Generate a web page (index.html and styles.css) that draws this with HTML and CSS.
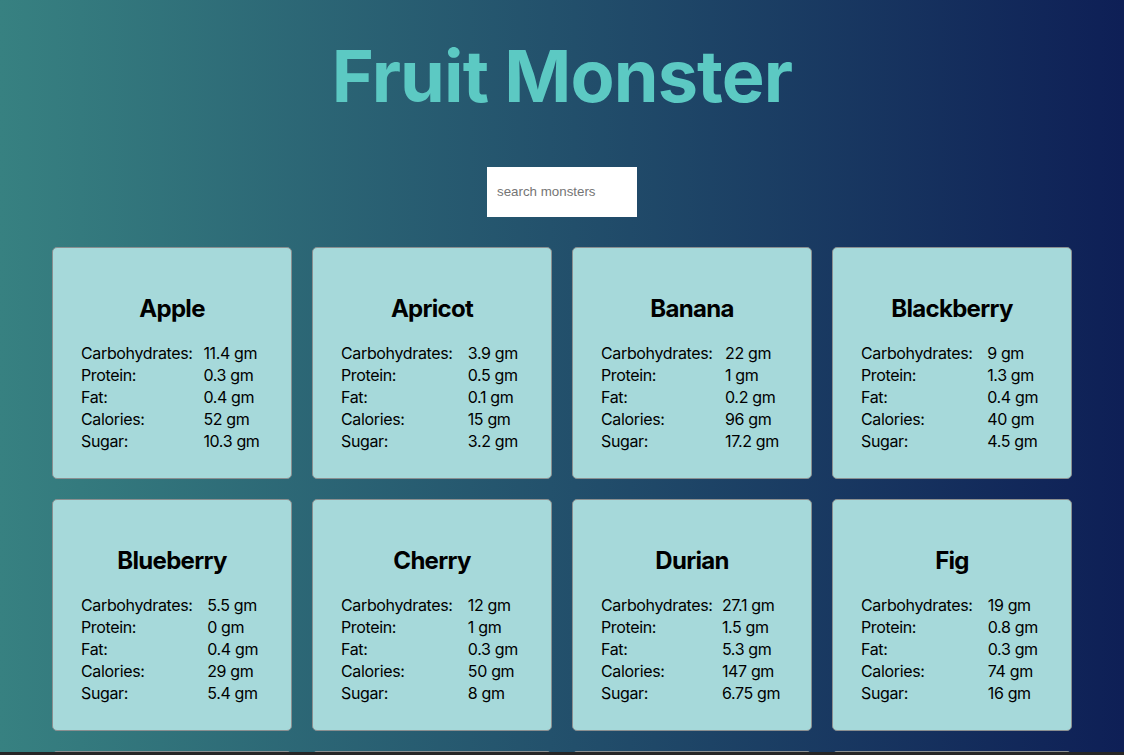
FILE: index.html
```html
<!doctype html>
<html lang="en">
  <head>
    <meta charset="UTF-8" />
    <meta name="viewport" content="width=device-width, initial-scale=1" />
    <title>Fruit Monster</title>
    <link rel="stylesheet" href="styles.css">
  </head>
  <body>
    <div class="app">
      <h1 class="app-title">Fruit Monster</h1>
      <input class="search" type="search" placeholder="search monsters" />

      <div class="card-list">
        <div class="card">
          <h2>Apple</h2>
          <table class="nutrition">
            <tr><td>Carbohydrates:</td><td>11.4 gm</td></tr>
            <tr><td>Protein:</td><td>0.3 gm</td></tr>
            <tr><td>Fat:</td><td>0.4 gm</td></tr>
            <tr><td>Calories:</td><td>52 gm</td></tr>
            <tr><td>Sugar:</td><td>10.3 gm</td></tr>
          </table>
        </div>
        <div class="card">
          <h2>Apricot</h2>
          <table class="nutrition">
            <tr><td>Carbohydrates:</td><td>3.9 gm</td></tr>
            <tr><td>Protein:</td><td>0.5 gm</td></tr>
            <tr><td>Fat:</td><td>0.1 gm</td></tr>
            <tr><td>Calories:</td><td>15 gm</td></tr>
            <tr><td>Sugar:</td><td>3.2 gm</td></tr>
          </table>
        </div>
        <div class="card">
          <h2>Banana</h2>
          <table class="nutrition">
            <tr><td>Carbohydrates:</td><td>22 gm</td></tr>
            <tr><td>Protein:</td><td>1 gm</td></tr>
            <tr><td>Fat:</td><td>0.2 gm</td></tr>
            <tr><td>Calories:</td><td>96 gm</td></tr>
            <tr><td>Sugar:</td><td>17.2 gm</td></tr>
          </table>
        </div>
        <div class="card">
          <h2>Blackberry</h2>
          <table class="nutrition">
            <tr><td>Carbohydrates:</td><td>9 gm</td></tr>
            <tr><td>Protein:</td><td>1.3 gm</td></tr>
            <tr><td>Fat:</td><td>0.4 gm</td></tr>
            <tr><td>Calories:</td><td>40 gm</td></tr>
            <tr><td>Sugar:</td><td>4.5 gm</td></tr>
          </table>
        </div>
        <div class="card">
          <h2>Blueberry</h2>
          <table class="nutrition">
            <tr><td>Carbohydrates:</td><td>5.5 gm</td></tr>
            <tr><td>Protein:</td><td>0 gm</td></tr>
            <tr><td>Fat:</td><td>0.4 gm</td></tr>
            <tr><td>Calories:</td><td>29 gm</td></tr>
            <tr><td>Sugar:</td><td>5.4 gm</td></tr>
          </table>
        </div>
        <div class="card">
          <h2>Cherry</h2>
          <table class="nutrition">
            <tr><td>Carbohydrates:</td><td>12 gm</td></tr>
            <tr><td>Protein:</td><td>1 gm</td></tr>
            <tr><td>Fat:</td><td>0.3 gm</td></tr>
            <tr><td>Calories:</td><td>50 gm</td></tr>
            <tr><td>Sugar:</td><td>8 gm</td></tr>
          </table>
        </div>
        <div class="card">
          <h2>Durian</h2>
          <table class="nutrition">
            <tr><td>Carbohydrates:</td><td>27.1 gm</td></tr>
            <tr><td>Protein:</td><td>1.5 gm</td></tr>
            <tr><td>Fat:</td><td>5.3 gm</td></tr>
            <tr><td>Calories:</td><td>147 gm</td></tr>
            <tr><td>Sugar:</td><td>6.75 gm</td></tr>
          </table>
        </div>
        <div class="card">
          <h2>Fig</h2>
          <table class="nutrition">
            <tr><td>Carbohydrates:</td><td>19 gm</td></tr>
            <tr><td>Protein:</td><td>0.8 gm</td></tr>
            <tr><td>Fat:</td><td>0.3 gm</td></tr>
            <tr><td>Calories:</td><td>74 gm</td></tr>
            <tr><td>Sugar:</td><td>16 gm</td></tr>
          </table>
        </div>
        <div class="card">
          <h2>Gooseberry</h2>
          <table class="nutrition">
            <tr><td>Carbohydrates:</td><td>10 gm</td></tr>
            <tr><td>Protein:</td><td>0.9 gm</td></tr>
            <tr><td>Fat:</td><td>0.6 gm</td></tr>
            <tr><td>Calories:</td><td>44 gm</td></tr>
            <tr><td>Sugar:</td><td>0 gm</td></tr>
          </table>
        </div>
        <div class="card">
          <h2>Grapes</h2>
          <table class="nutrition">
            <tr><td>Carbohydrates:</td><td>18.1 gm</td></tr>
            <tr><td>Protein:</td><td>0.72 gm</td></tr>
            <tr><td>Fat:</td><td>0.16 gm</td></tr>
            <tr><td>Calories:</td><td>69 gm</td></tr>
            <tr><td>Sugar:</td><td>16 gm</td></tr>
          </table>
        </div>
        <div class="card">
          <h2>Guava</h2>
          <table class="nutrition">
            <tr><td>Carbohydrates:</td><td>14 gm</td></tr>
            <tr><td>Protein:</td><td>2.6 gm</td></tr>
            <tr><td>Fat:</td><td>1 gm</td></tr>
            <tr><td>Calories:</td><td>68 gm</td></tr>
            <tr><td>Sugar:</td><td>9 gm</td></tr>
          </table>
        </div>
        <div class="card">
          <h2>Kiwi</h2>
          <table class="nutrition">
            <tr><td>Carbohydrates:</td><td>14.6 gm</td></tr>
            <tr><td>Protein:</td><td>1.1 gm</td></tr>
            <tr><td>Fat:</td><td>0.5 gm</td></tr>
            <tr><td>Calories:</td><td>61 gm</td></tr>
            <tr><td>Sugar:</td><td>9 gm</td></tr>
          </table>
        </div>
      </div>
    </div>
    <div class="bottom-edge"></div>
  </body>
</html>
```

FILE: styles.css
```css
body {
  margin: 0;
  font-family: Inter, "Liberation Sans", sans-serif;
  background: linear-gradient(to left, #0e1f56 0%, #378181 100%);
  background-attachment: fixed;
  min-height: 100vh;
}
.app {
  display: flex;
  flex-direction: column;
  align-items: center;
}
.app-title {
  margin: 32px 0 48px;
  font-size: 72px;
  font-weight: 700;
  letter-spacing: -0.9px;
  color: #5cc9c3;
}
.search {
  -webkit-appearance: none;
  appearance: none;
  box-sizing: border-box;
  border: none;
  outline: none;
  padding: 10px;
  width: 150px;
  line-height: 30px;
  margin: 0 0 30px;
  font-family: "Liberation Sans", Arial, sans-serif;
  font-size: 13.33px;
  background: #fff;
}
.search::placeholder {
  color: #757575;
}
.card-list {
  width: 1020px;
  display: grid;
  grid-template-columns: repeat(4, 1fr);
  gap: 20px;
}
.card {
  background-color: #a6d9da;
  border: 1px solid #8a8f90;
  border-radius: 5px;
  padding: 25px;
  color: #000;
}
.card h2 {
  margin: 21px 0 18px;
  text-align: center;
  font-size: 24px;
  font-weight: 700;
  letter-spacing: -0.7px;
}
.nutrition {
  width: 100%;
  font-size: 16px;
  line-height: 18px;
  letter-spacing: -0.35px;
}
.nutrition td {
  padding: 1px;
  white-space: nowrap;
}
.bottom-edge {
  position: fixed;
  left: 0;
  right: 0;
  bottom: 0;
  height: 3px;
  background: #262626;
}
```
